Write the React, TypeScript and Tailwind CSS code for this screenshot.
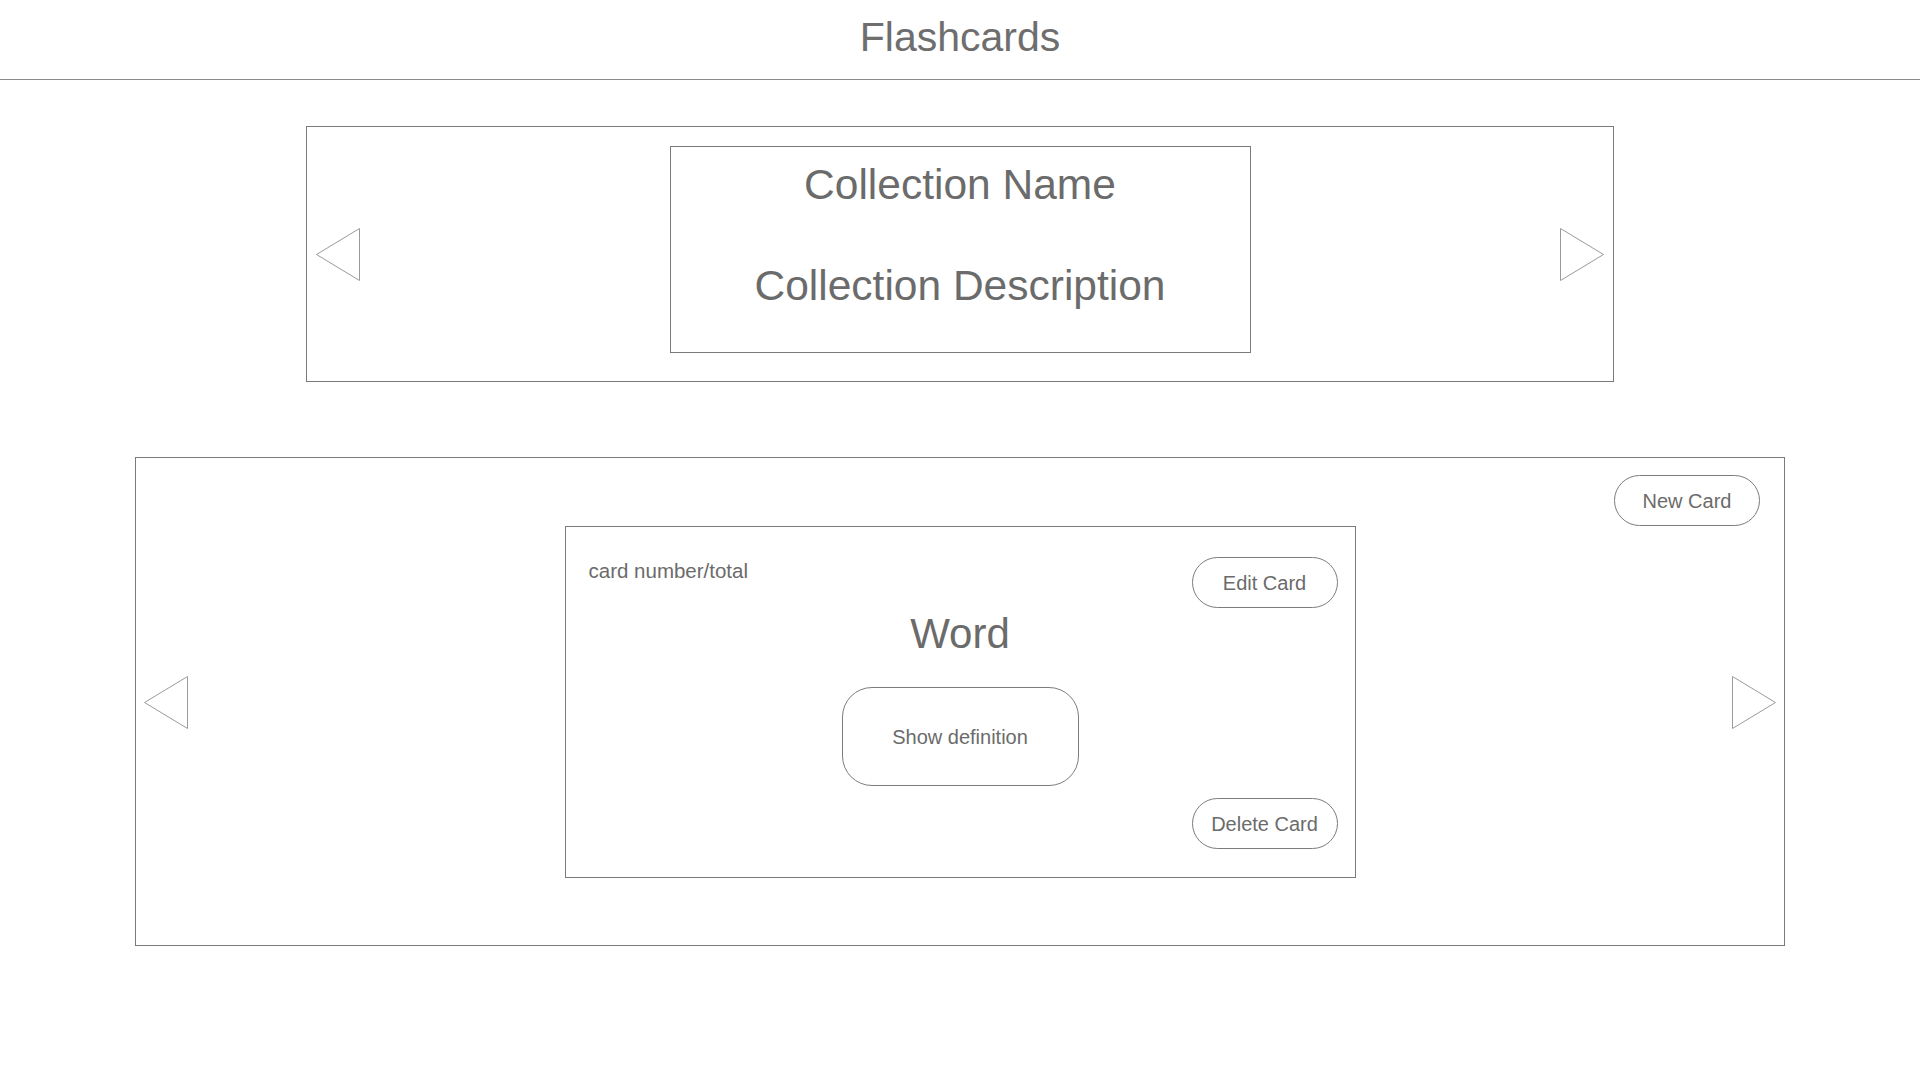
import React from 'react';

const Arrow = ({ dir }: { dir: 'left' | 'right' }) => (
    <svg width="44" height="53" viewBox="0 0 44 53" className="shrink-0">
        <polygon
            points={dir === 'left' ? '43.5,0.5 0.5,26.5 43.5,52.5' : '0.5,0.5 43.5,26.5 0.5,52.5'}
            fill="none"
            stroke="#9a9a9a"
            strokeWidth="1"
        />
    </svg>
);

const PillButton = ({ label }: { label: string }) => (
    <button className="w-[146px] h-[51px] rounded-full border border-[#7c7c7c] text-[20px] leading-none text-[#6b6b6b] flex items-center justify-center">
        {label}
    </button>
);

export default function App() {
    return (
        <div className="min-h-screen bg-white text-[#6b6b6b]" style={{ fontFamily: '"Liberation Sans", Arial, sans-serif' }}>
            <header className="h-[80px] border-b border-[#8a8a8a] pt-[17px] text-center">
                <h1 className="text-[41px] leading-none text-[#6e6e6e]">Flashcards</h1>
            </header>

            {/* collection carousel */}
            <section className="mt-[46px] mx-auto w-[1308px] h-[256px] border border-[#7a7a7a] flex items-center justify-between px-[9px]">
                <Arrow dir="left" />
                <div className="self-start mt-[19px] w-[581px] h-[207px] border border-[#7a7a7a] pt-[17px] text-center">
                    <p className="text-[42.5px] leading-none">Collection Name</p>
                    <p className="mt-[58px] text-[42.5px] leading-none">Collection Description</p>
                </div>
                <Arrow dir="right" />
            </section>

            {/* cards */}
            <section className="mt-[75px] mx-auto w-[1650px] h-[489px] border border-[#7a7a7a] flex flex-col">
                <div className="flex justify-end pt-[17px] pr-[24px]">
                    <PillButton label="New Card" />
                </div>
                <div className="flex items-center justify-between px-[8px]">
                    <Arrow dir="left" />
                    <div className="w-[791px] h-[352px] border border-[#7a7a7a] pt-[30px] flex flex-col">
                        <div className="flex items-start justify-between pl-[23px] pr-[17px]">
                            <span className="mt-[4px] text-[20.5px] leading-none">card number/total</span>
                            <PillButton label="Edit Card" />
                        </div>
                        <p className="mt-[5px] text-center text-[42px] leading-none">Word</p>
                        <button className="mt-[32px] mx-auto w-[237px] h-[99px] rounded-[30px] border border-[#7c7c7c] text-[20px] leading-none text-[#6b6b6b]">
                            Show definition
                        </button>
                        <div className="mt-[12px] flex justify-end pr-[17px]">
                            <PillButton label="Delete Card" />
                        </div>
                    </div>
                    <Arrow dir="right" />
                </div>
            </section>
        </div>
    );
}
